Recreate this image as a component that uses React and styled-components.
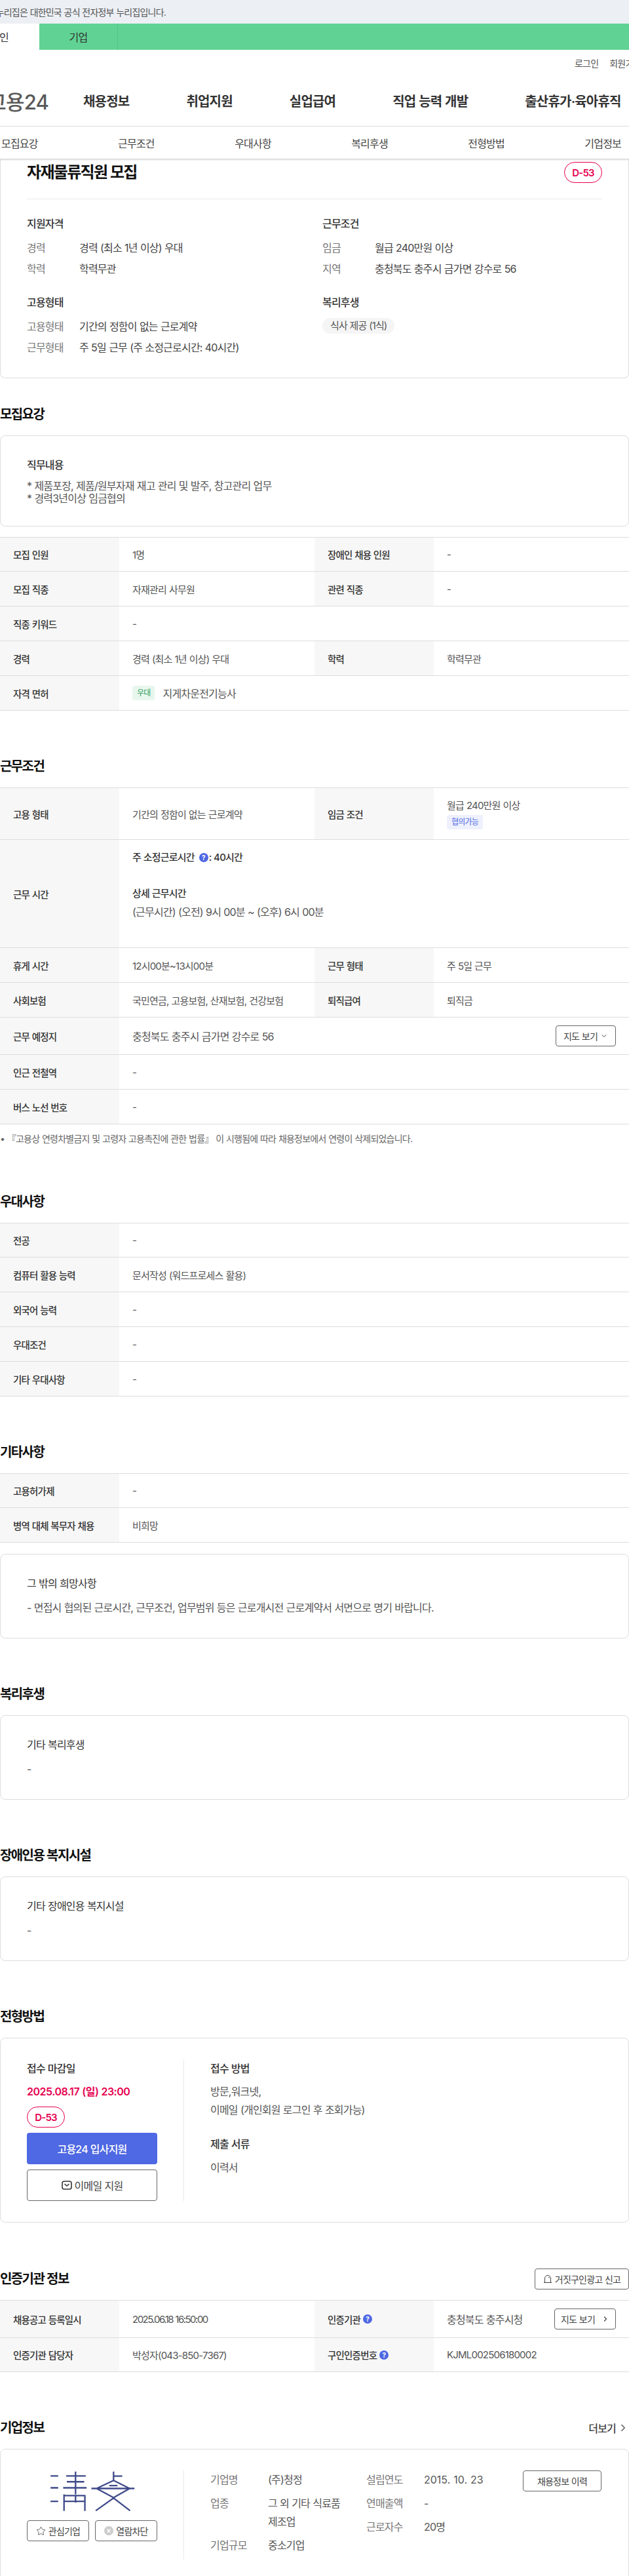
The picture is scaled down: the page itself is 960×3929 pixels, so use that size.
import React from 'react';
import styled, { createGlobalStyle } from 'styled-components';
import { ChevronDown, ChevronRight, Star } from 'lucide-react';

const Global = createGlobalStyle`
  html, body { margin: 0; padding: 0; background: #fff; }
  body {
    font-family: "Inter", "Noto Sans CJK KR", "Noto Sans", sans-serif;
    letter-spacing: -0.05em;
    word-spacing: 0.03em;
    color: #222;
    overflow-x: hidden;
  }
  * { box-sizing: border-box; }
`;

const Page = styled.div`
  width: 960px;
  height: 3929px;
  overflow: hidden;
`;

const Notice = styled.div`
  height: 36px;
  background: #eceff4;
  display: flex;
  align-items: center;
`;
const NoticeClip = styled.div`
  width: 253px;
  display: flex;
  justify-content: flex-end;
  white-space: nowrap;
  font-size: 14px;
  color: #555;
`;
const AudienceBar = styled.div`
  height: 40px;
  background: #60d394;
  display: flex;
`;
const AudienceTab = styled.div`
  width: ${p => p.$w}px;
  background: ${p => (p.$active ? '#fff' : 'transparent')};
  border-right: ${p => (p.$active ? 'none' : '1px solid #55c488')};
  display: flex;
  align-items: center;
  justify-content: ${p => (p.$active ? 'flex-end' : 'center')};
  padding-right: ${p => (p.$active ? '47px' : '0')};
  white-space: nowrap;
  font-size: 16px;
  color: #333;
`;
const Utility = styled.div`
  height: 40px;
  padding-left: 877px;
  display: flex;
  gap: 17px;
  align-items: center;
  font-size: 14px;
  color: #555;
  white-space: nowrap;
`;
const MainNav = styled.nav`
  height: 77px;
  display: flex;
  align-items: center;
  border-bottom: 1px solid #e8e8e8;
  padding-bottom: 1px;
`;
const LogoClip = styled.div`
  width: 74px;
  display: flex;
  justify-content: flex-end;
  white-space: nowrap;
  font-size: 31px;
  font-weight: 500;
  color: #5a5a5a;
  margin-right: 53px;
`;
const NavList = styled.div`
  display: flex;
  gap: 87px;
  white-space: nowrap;
`;
const NavItem = styled.span`
  font-size: 20px;
  font-weight: 600;
  color: #333;
`;
const SubNav = styled.div`
  position: relative;
  z-index: 1;
  height: 49px;
  background: #fff;
  display: flex;
  justify-content: space-between;
  align-items: center;
  padding: 0 12px 0 2px;
  font-size: 16px;
  color: #444;
  box-shadow: 0 1px 3px rgba(0, 0, 0, 0.25);
`;

const HeroCard = styled.section`
  border: 1px solid #ddd;
  border-top: none;
  border-radius: 0 0 8px 8px;
  padding: 0 40px 34px;
`;
const TitleRow = styled.div`
  height: 62px;
  display: flex;
  justify-content: space-between;
  padding-top: 5px;
  border-bottom: 1px solid #e8e8e8;
`;
const JobTitle = styled.h1`
  margin: 0;
  font-size: 24px;
  line-height: 32px;
  font-weight: 700;
  color: #111;
  letter-spacing: -0.07em;
`;
const DBadge = styled.span`
  width: 58px;
  height: 32px;
  border: 1px solid #e6004f;
  border-radius: 16px;
  color: #e6004f;
  font-size: 15px;
  font-weight: 600;
  display: flex;
  align-items: center;
  justify-content: center;
`;
const HeroGrid = styled.div`
  display: grid;
  grid-template-columns: 451px 1fr;
  padding-top: 25px;
  row-gap: 27px;
`;
const HeroGroup = styled.div``;
const HeroHead = styled.h3`
  margin: 0 0 13px;
  font-size: 16px;
  line-height: 24px;
  font-weight: 500;
  color: #333;
`;
const HeroRow = styled.div`
  display: flex;
  font-size: 16px;
  line-height: 24px;
  margin-top: 8px;
  color: #444;
  white-space: nowrap;
`;
const HeroKey = styled.span`
  width: 80px;
  color: #777;
`;
const Chip = styled.span`
  display: inline-block;
  height: 24px;
  line-height: 24px;
  border-radius: 12px;
  background: #f5f5f5;
  padding: 0 12px;
  font-size: 15px;
  letter-spacing: -0.06em;
  color: #555;
  margin-top: -1px;
`;

const Section = styled.section`
  margin-top: ${p => p.$top}px;
`;
const HeadRow = styled.div`
  display: flex;
  justify-content: space-between;
  align-items: center;
  height: 32px;
  margin-bottom: 16px;
`;
const SectionTitle = styled.h2`
  margin: 0;
  font-size: 20px;
  line-height: 32px;
  font-weight: 600;
  color: #111;
  letter-spacing: -0.08em;
`;
const MoreLink = styled.span`
  display: flex;
  align-items: center;
  gap: 2px;
  font-size: 16px;
  font-weight: 500;
  color: #444;
`;

const Card = styled.div`
  border: 1px solid #ddd;
  border-radius: 8px;
  padding: 32px 40px ${p => p.$pb ?? 32}px;
  margin-top: ${p => p.$top ?? 0}px;
`;
const CardTitle = styled.div`
  font-size: 16px;
  line-height: 24px;
  font-weight: ${p => p.$weight ?? 400};
  color: #333;
`;
const CardText = styled.div`
  font-size: 16px;
  line-height: ${p => p.$lh ?? 24}px;
  margin-top: ${p => p.$gap ?? 12}px;
  color: #555;
`;

const Table = styled.div`
  border-top: 1px solid #ddd;
  margin-top: ${p => p.$top ?? 0}px;
`;
const Row = styled.div`
  display: grid;
  grid-template-columns: 182px 298px 182px 298px;
  min-height: ${p => p.$h ?? 53}px;
  border-bottom: 1px solid #ddd;
`;
const Label = styled.div`
  background: #f7f7f7;
  padding: 0 20px;
  display: flex;
  align-items: center;
  gap: 4px;
  font-size: 14.5px;
  font-weight: 500;
  color: #333;
`;
const Value = styled.div`
  grid-column: ${p => (p.$wide ? 'span 3' : 'auto')};
  padding: 0 20px;
  display: flex;
  align-items: center;
  gap: 12px;
  font-size: 15px;
  letter-spacing: ${p => (p.$tight ? '-0.1em' : 'inherit')};
  color: #555;
  white-space: nowrap;
`;
const LicenseName = styled.span`
  font-size: 16px;
`;
const StackValue = styled(Value)`
  flex-direction: column;
  align-items: flex-start;
  gap: 5px;
  justify-content: center;
`;
const SpreadValue = styled(Value)`
  justify-content: space-between;
  font-size: 16px;
`;
const HoursCell = styled.div`
  grid-column: span 3;
  padding: 13px 20px 40px;
  font-size: 15px;
  line-height: 28px;
  color: #555;
`;
const HoursHead = styled.div`
  display: flex;
  align-items: center;
  font-weight: 500;
  color: #333;
  margin-bottom: ${p => p.$mb ?? 0}px;
`;
const HoursHelp = styled.span`
  display: flex;
  margin: 0 1px 0 7px;
`;
const HoursLine = styled.div`
  font-size: 16px;
`;
const SoftTag = styled.span`
  height: 22px;
  line-height: 22px;
  padding: 0 7px;
  border-radius: 3px;
  font-size: 12px;
  background: ${p => (p.$tone === 'green' ? '#e8f7ee' : '#eef1fd')};
  color: ${p => (p.$tone === 'green' ? '#2f9e5c' : '#4f68e3')};
`;
const Help = styled.span`
  width: 14px;
  height: 14px;
  border-radius: 50%;
  background: #4f68e3;
  color: #fff;
  font-size: 10px;
  font-weight: 700;
  line-height: 14px;
  text-align: center;
  letter-spacing: 0;
`;
const OutlineButton = styled.button`
  display: inline-flex;
  align-items: center;
  justify-content: center;
  gap: ${p => p.$gap ?? 4}px;
  width: ${p => p.$w}px;
  height: ${p => p.$h ?? 32}px;
  padding: 0;
  background: #fff;
  border: 1px solid #666;
  border-radius: 4px;
  font-family: inherit;
  letter-spacing: inherit;
  word-spacing: inherit;
  font-size: ${p => p.$size ?? 14}px;
  color: #444;
  white-space: nowrap;
`;
const Note = styled.div`
  margin-top: 12px;
  font-size: 14px;
  line-height: 20px;
  letter-spacing: -0.055em;
  color: #666;
  white-space: nowrap;
`;

const Split = styled.div`
  display: grid;
  grid-template-columns: 240px 1fr;
`;
const LeftCol = styled.div`
  border-right: 1px solid #e8e8e8;
  padding-right: 40px;
  display: flex;
  flex-direction: column;
  align-items: stretch;
`;
const RightCol = styled.div`
  padding-left: 40px;
  min-width: 0;
`;
const ApplyHead = styled.div`
  font-size: 16px;
  line-height: 28px;
  font-weight: 500;
  color: #333;
  margin-top: ${p => p.$top ?? 0}px;
`;
const ApplyText = styled.div`
  font-size: 16px;
  line-height: 28px;
  color: #555;
  margin-top: ${p => p.$top ?? 0}px;
`;
const Deadline = styled.div`
  font-size: 16px;
  line-height: 28px;
  margin-top: 7px;
  color: #e6004f;
  font-weight: 600;
  letter-spacing: -0.03em;
`;
const BadgeSlot = styled.div`
  margin-top: 9px;
`;
const PrimaryButton = styled.button`
  margin-top: 8px;
  height: 48px;
  border: 0;
  border-radius: 4px;
  background: #4f68e3;
  color: #fff;
  font-family: inherit;
  letter-spacing: inherit;
  word-spacing: inherit;
  font-size: 16px;
  font-weight: 500;
`;
const MailButton = styled(OutlineButton)`
  margin-top: 8px;
  width: auto;
  height: 48px;
`;
const LogoBox = styled.div`
  height: 76px;
  display: flex;
  justify-content: center;
  align-items: flex-start;
`;
const ActionRow = styled.div`
  display: flex;
  justify-content: space-between;
`;
const CompanyGrid = styled.div`
  display: flex;
`;
const CompanyCol = styled.div`
  flex: none;
  width: ${p => p.$w}px;
`;
const CompanyRow = styled.div`
  display: flex;
  font-size: 16px;
  line-height: 28px;
  margin-bottom: 8px;
  color: #555;
`;
const CompanyKey = styled.span`
  flex: none;
  width: 88px;
  color: #777;
`;
const CompanyValue = styled.span`
  flex: 1;
  word-break: keep-all;
  padding-right: 26px;
  letter-spacing: ${p => (p.$loose ? '0' : 'inherit')};
`;

const Logo = () => (
  <svg width="132" height="63" viewBox="45 20 395 190" fill="none" stroke="#3f4a8a" strokeWidth="7">
    <path d="M50 45h35M50 100h35M50 162h35" />
    <path d="M122 45h90M165 25v105M125 72h80M108 100h108M112 130v76M208 133v73M165 133v35M112 136h96M115 162h92" />
    <path d="M340 25v43M340 46h40M238 103h198M340 66l74 37-74 42-78-42zM320 90h38M258 205l82-58 76 58" />
  </svg>
);

const MailIcon = () => (
  <svg width="16" height="14" viewBox="0 0 16 14" fill="none" stroke="#333" strokeWidth="1.6">
    <rect x="1" y="1" width="14" height="12" rx="3" />
    <path d="M4.5 5l3.5 3 3.5-3" />
  </svg>
);
const BellIcon = () => (
  <svg width="14" height="14" viewBox="0 0 14 14" fill="none" stroke="#444" strokeWidth="1">
    <path d="M1 12.5h12M2.5 12.5V6a4.5 4.5 0 0 1 9 0v6.5M8 4.2a2 2 0 0 1 1.5 1.6" />
  </svg>
);
const BlockIcon = () => (
  <svg width="14" height="14" viewBox="0 0 14 14">
    <circle cx="7" cy="7" r="7" fill="#ccc" />
    <path d="M4.6 4.6l4.8 4.8M9.4 4.6l-4.8 4.8" stroke="#fff" strokeWidth="1.4" />
  </svg>
);

const KVRow = ({ a, b, c, d, h }) => (
  <Row $h={h}>
    <Label>{a}</Label>
    {c ? <Value>{b}</Value> : <Value $wide>{b}</Value>}
    {c && <Label>{c}</Label>}
    {c && <Value>{d}</Value>}
  </Row>
);

export default function App() {
  return (
    <Page>
      <Global />
      <Notice><NoticeClip>이 누리집은 대한민국 공식 전자정부 누리집입니다.</NoticeClip></Notice>
      <AudienceBar>
        <AudienceTab $active $w={60}>개인</AudienceTab>
        <AudienceTab $w={120}>기업</AudienceTab>
      </AudienceBar>
      <Utility><span>로그인</span><span>회원가입</span></Utility>
      <MainNav>
        <LogoClip>고용24</LogoClip>
        <NavList>
          <NavItem>채용정보</NavItem>
          <NavItem>취업지원</NavItem>
          <NavItem>실업급여</NavItem>
          <NavItem>직업 능력 개발</NavItem>
          <NavItem>출산휴가·육아휴직</NavItem>
        </NavList>
      </MainNav>
      <SubNav>
        <span>모집요강</span><span>근무조건</span><span>우대사항</span>
        <span>복리후생</span><span>전형방법</span><span>기업정보</span>
      </SubNav>

      <HeroCard>
        <TitleRow>
          <JobTitle>자재물류직원 모집</JobTitle>
          <DBadge>D-53</DBadge>
        </TitleRow>
        <HeroGrid>
          <HeroGroup>
            <HeroHead>지원자격</HeroHead>
            <HeroRow><HeroKey>경력</HeroKey>경력 (최소 1년 이상) 우대</HeroRow>
            <HeroRow><HeroKey>학력</HeroKey>학력무관</HeroRow>
          </HeroGroup>
          <HeroGroup>
            <HeroHead>근무조건</HeroHead>
            <HeroRow><HeroKey>임금</HeroKey>월급 240만원 이상</HeroRow>
            <HeroRow><HeroKey>지역</HeroKey>충청북도 충주시 금가면 강수로 56</HeroRow>
          </HeroGroup>
          <HeroGroup>
            <HeroHead>고용형태</HeroHead>
            <HeroRow><HeroKey>고용형태</HeroKey>기간의 정함이 없는 근로계약</HeroRow>
            <HeroRow><HeroKey>근무형태</HeroKey>주 5일 근무 (주 소정근로시간: 40시간)</HeroRow>
          </HeroGroup>
          <HeroGroup>
            <HeroHead>복리후생</HeroHead>
            <Chip>식사 제공 (1식)</Chip>
          </HeroGroup>
        </HeroGrid>
      </HeroCard>

      <Section $top={39}>
        <HeadRow><SectionTitle>모집요강</SectionTitle></HeadRow>
        <Card>
          <CardTitle $weight={500}>직무내용</CardTitle>
          <CardText $lh={19} $gap={11}>
            * 제품포장, 제품/원부자재 재고 관리 및 발주, 창고관리 업무<br />
            * 경력3년이상 임금협의
          </CardText>
        </Card>
        <Table $top={16}>
          <KVRow h={52} a="모집 인원" b="1명" c="장애인 채용 인원" d="-" />
          <KVRow a="모집 직종" b="자재관리 사무원" c="관련 직종" d="-" />
          <KVRow a="직종 키워드" b="-" />
          <KVRow a="경력" b="경력 (최소 1년 이상) 우대" c="학력" d="학력무관" />
          <KVRow a="자격 면허" b={<><SoftTag $tone="green">우대</SoftTag><LicenseName>지게차운전기능사</LicenseName></>} />
        </Table>
      </Section>

      <Section $top={69}>
        <HeadRow><SectionTitle>근무조건</SectionTitle></HeadRow>
        <Table>
          <Row $h={79}>
            <Label>고용 형태</Label>
            <Value>기간의 정함이 없는 근로계약</Value>
            <Label>임금 조건</Label>
            <StackValue>월급 240만원 이상<SoftTag>협의가능</SoftTag></StackValue>
          </Row>
          <Row $h={165}>
            <Label>근무 시간</Label>
            <HoursCell>
              <HoursHead $mb={27}>주 소정근로시간<HoursHelp><Help>?</Help></HoursHelp>: 40시간</HoursHead>
              <HoursHead>상세 근무시간</HoursHead>
              <HoursLine>(근무시간) (오전) 9시 00분 ~ (오후) 6시 00분</HoursLine>
            </HoursCell>
          </Row>
          <KVRow a="휴게 시간" b="12시00분~13시00분" c="근무 형태" d="주 5일 근무" />
          <KVRow a="사회보험" b="국민연금, 고용보험, 산재보험, 건강보험" c="퇴직급여" d="퇴직금" />
          <Row $h={57}>
            <Label>근무 예정지</Label>
            <SpreadValue $wide>
              충청북도 충주시 금가면 강수로 56
              <OutlineButton $w={92}>지도 보기 <ChevronDown size={12} /></OutlineButton>
            </SpreadValue>
          </Row>
          <KVRow a="인근 전철역" b="-" />
          <KVRow a="버스 노선 번호" b="-" />
        </Table>
        <Note>• 『고용상 연령차별금지 및 고령자 고용촉진에 관한 법률』 이 시행됨에 따라 채용정보에서 연령이 삭제되었습니다.</Note>
      </Section>

      <Section $top={70}>
        <HeadRow><SectionTitle>우대사항</SectionTitle></HeadRow>
        <Table>
          <KVRow h={52} a="전공" b="-" />
          <KVRow a="컴퓨터 활용 능력" b="문서작성 (워드프로세스 활용)" />
          <KVRow a="외국어 능력" b="-" />
          <KVRow a="우대조건" b="-" />
          <KVRow a="기타 우대사항" b="-" />
        </Table>
      </Section>

      <Section $top={69}>
        <HeadRow><SectionTitle>기타사항</SectionTitle></HeadRow>
        <Table>
          <KVRow h={52} a="고용허가제" b="-" />
          <KVRow a="병역 대체 복무자 채용" b="비희망" />
        </Table>
        <Card $top={17} $pb={34}>
          <CardTitle>그 밖의 희망사항</CardTitle>
          <CardText $gap={13}>- 면접시 협의된 근로시간, 근무조건, 업무범위 등은 근로개시전 근로계약서 서면으로 명기 바랍니다.</CardText>
        </Card>
      </Section>

      <Section $top={69}>
        <HeadRow><SectionTitle>복리후생</SectionTitle></HeadRow>
        <Card $pb={34}>
          <CardTitle>기타 복리후생</CardTitle>
          <CardText $gap={13}>-</CardText>
        </Card>
      </Section>

      <Section $top={69}>
        <HeadRow><SectionTitle>장애인용 복지시설</SectionTitle></HeadRow>
        <Card $pb={34}>
          <CardTitle>기타 장애인용 복지시설</CardTitle>
          <CardText $gap={13}>-</CardText>
        </Card>
      </Section>

      <Section $top={69}>
        <HeadRow><SectionTitle>전형방법</SectionTitle></HeadRow>
        <Card>
          <Split>
            <LeftCol>
              <ApplyHead>접수 마감일</ApplyHead>
              <Deadline>2025.08.17 (일) 23:00</Deadline>
              <BadgeSlot><DBadge>D-53</DBadge></BadgeSlot>
              <PrimaryButton>고용24 입사지원</PrimaryButton>
              <MailButton $size={16}><MailIcon />이메일 지원</MailButton>
            </LeftCol>
            <RightCol>
              <ApplyHead>접수 방법</ApplyHead>
              <ApplyText $top={7}>방문,워크넷,</ApplyText>
              <ApplyText>이메일 (개인회원 로그인 후 조회가능)</ApplyText>
              <ApplyHead $top={24}>제출 서류</ApplyHead>
              <ApplyText $top={8}>이력서</ApplyText>
            </RightCol>
          </Split>
        </Card>
      </Section>

      <Section $top={70}>
        <HeadRow>
          <SectionTitle>인증기관 정보</SectionTitle>
          <OutlineButton $w={144}><BellIcon />거짓구인광고 신고</OutlineButton>
        </HeadRow>
        <Table>
          <Row $h={57}>
            <Label>채용공고 등록일시</Label>
            <Value $tight>2025.06.18 16:50:00</Value>
            <Label>인증기관 <Help>?</Help></Label>
            <SpreadValue>
              충청북도 충주시청
              <OutlineButton $w={94} $gap={10}>지도 보기 <ChevronRight size={12} strokeWidth={2.6} /></OutlineButton>
            </SpreadValue>
          </Row>
          <Row $h={52}>
            <Label>인증기관 담당자</Label>
            <Value>박성자(043-850-7367)</Value>
            <Label>구인인증번호 <Help>?</Help></Label>
            <Value>KJML002506180002</Value>
          </Row>
        </Table>
      </Section>

      <Section $top={69}>
        <HeadRow>
          <SectionTitle>기업정보</SectionTitle>
          <MoreLink>더보기 <ChevronRight size={18} strokeWidth={1.5} /></MoreLink>
        </HeadRow>
        <Card>
          <Split>
            <LeftCol>
              <LogoBox><Logo /></LogoBox>
              <ActionRow>
                <OutlineButton $w={95}><Star size={15} strokeWidth={1.3} />관심기업</OutlineButton>
                <OutlineButton $w={95}><BlockIcon />열람차단</OutlineButton>
              </ActionRow>
            </LeftCol>
            <RightCol>
              <CompanyGrid>
                <CompanyCol $w={238}>
                  <CompanyRow><CompanyKey>기업명</CompanyKey><CompanyValue>(주)청정</CompanyValue></CompanyRow>
                  <CompanyRow><CompanyKey>업종</CompanyKey><CompanyValue>그 외 기타 식료품 제조업</CompanyValue></CompanyRow>
                  <CompanyRow><CompanyKey>기업규모</CompanyKey><CompanyValue>중소기업</CompanyValue></CompanyRow>
                </CompanyCol>
                <CompanyCol $w={239}>
                  <CompanyRow><CompanyKey>설립연도</CompanyKey><CompanyValue $loose>2015. 10. 23</CompanyValue></CompanyRow>
                  <CompanyRow><CompanyKey>연매출액</CompanyKey><CompanyValue>-</CompanyValue></CompanyRow>
                  <CompanyRow><CompanyKey>근로자수</CompanyKey><CompanyValue>20명</CompanyValue></CompanyRow>
                </CompanyCol>
                <OutlineButton $w={120}>채용정보 이력</OutlineButton>
              </CompanyGrid>
            </RightCol>
          </Split>
        </Card>
      </Section>
    </Page>
  );
}
